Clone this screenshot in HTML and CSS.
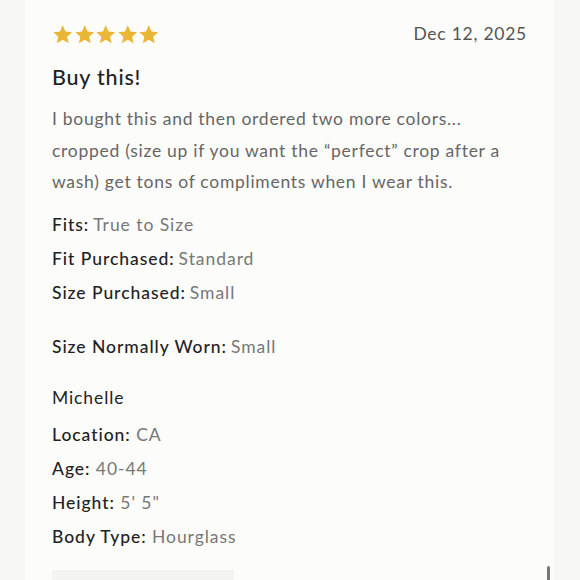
FILE: index.html
```html
<!DOCTYPE html>
<html lang="en">
<head>
<meta charset="utf-8">
<title>Review</title>
<link rel="stylesheet" href="styles.css">
</head>
<body>
<div class="page">
  <article class="card">
    <div class="head">
      <div class="stars" aria-label="5 stars">
        <svg viewBox="0 0 24 24" class="star"><path d="M12 1.5l3.1 6.9 7.4.7-5.6 5 1.7 7.4L12 17.6l-6.6 3.9 1.7-7.4-5.6-5 7.4-.7z"/></svg>
        <svg viewBox="0 0 24 24" class="star"><path d="M12 1.5l3.1 6.9 7.4.7-5.6 5 1.7 7.4L12 17.6l-6.6 3.9 1.7-7.4-5.6-5 7.4-.7z"/></svg>
        <svg viewBox="0 0 24 24" class="star"><path d="M12 1.5l3.1 6.9 7.4.7-5.6 5 1.7 7.4L12 17.6l-6.6 3.9 1.7-7.4-5.6-5 7.4-.7z"/></svg>
        <svg viewBox="0 0 24 24" class="star"><path d="M12 1.5l3.1 6.9 7.4.7-5.6 5 1.7 7.4L12 17.6l-6.6 3.9 1.7-7.4-5.6-5 7.4-.7z"/></svg>
        <svg viewBox="0 0 24 24" class="star"><path d="M12 1.5l3.1 6.9 7.4.7-5.6 5 1.7 7.4L12 17.6l-6.6 3.9 1.7-7.4-5.6-5 7.4-.7z"/></svg>
      </div>
      <div class="date">Dec 12, 2025</div>
    </div>
    <h2 class="title">Buy this!</h2>
    <p class="text">I bought this and then ordered two more colors... cropped (size up if you want the “perfect” crop after a wash) get tons of compliments when I wear this.</p>
    <div class="fit">
      <div class="row"><span class="label">Fits:</span><span class="value">True to Size</span></div>
      <div class="row"><span class="label">Fit Purchased:</span><span class="value">Standard</span></div>
      <div class="row"><span class="label">Size Purchased:</span><span class="value">Small</span></div>
    </div>
    <div class="row worn"><span class="label">Size Normally Worn:</span><span class="value">Small</span></div>
    <div class="author">Michelle</div>
    <div class="profile">
      <div class="row"><span class="label">Location:</span> <span class="value">CA</span></div>
      <div class="row"><span class="label">Age:</span> <span class="value">40-44</span></div>
      <div class="row"><span class="label">Height:</span> <span class="value">5' 5"</span></div>
      <div class="row"><span class="label">Body Type:</span> <span class="value">Hourglass</span></div>
    </div>
    <div class="photo"></div>
  </article>
  <div class="scroll-thumb"></div>
</div>
</body>
</html>
```
FILE: styles.css
```css
html, body {
  margin: 0;
  padding: 0;
  background: #f7f7f5;
  height: 580px;
  overflow: hidden;
}
.page {
  position: relative;
  height: 580px;
  font-family: Lato, "Noto Sans", sans-serif;
}
.card {
  margin-left: 25px;
  width: 529px;
  height: 580px;
  box-sizing: border-box;
  padding: 24px 27px 0 27px;
  background: #fcfcfa;
  overflow: hidden;
}
.head {
  display: flex;
  justify-content: space-between;
  align-items: center;
  height: 22px;
}
.stars {
  display: flex;
}
.star {
  width: 21.5px;
  height: 21.5px;
  fill: #e9b733;
  display: block;
}
.date {
  font-size: 17.5px;
  color: #555;
  letter-spacing: 0.75px;
  position: relative;
  top: -2px;
}
.title {
  margin: 17px 0 0 0;
  font-size: 21.5px;
  font-weight: 500;
  letter-spacing: 0.8px;
  color: #222;
  line-height: 28px;
}
.text {
  margin: 12px 0 0 0;
  font-size: 17.5px;
  line-height: 31.5px;
  color: #666;
  letter-spacing: 0.72px;
}
.fit {
  margin-top: 10px;
}
.row {
  font-size: 17.5px;
  line-height: 34px;
  letter-spacing: 0.95px;
}
.fit .row .label,
.worn .label {
  margin-right: 4px;
}
.label {
  color: #222;
  font-weight: 500;
}
.value {
  color: #777;
}
.worn {
  margin-top: 20px;
}
.author {
  margin-top: 17px;
  font-size: 17.5px;
  line-height: 34px;
  color: #222;
  letter-spacing: 0.9px;
}
.profile {
  margin-top: 3px;
}
.photo {
  margin-top: 16px;
  width: 182px;
  height: 40px;
  background: #f3f3f1;
}
.scroll-thumb {
  position: absolute;
  left: 547px;
  top: 566px;
  width: 3px;
  height: 20px;
  border-radius: 2px;
  background: #777;
}
```
